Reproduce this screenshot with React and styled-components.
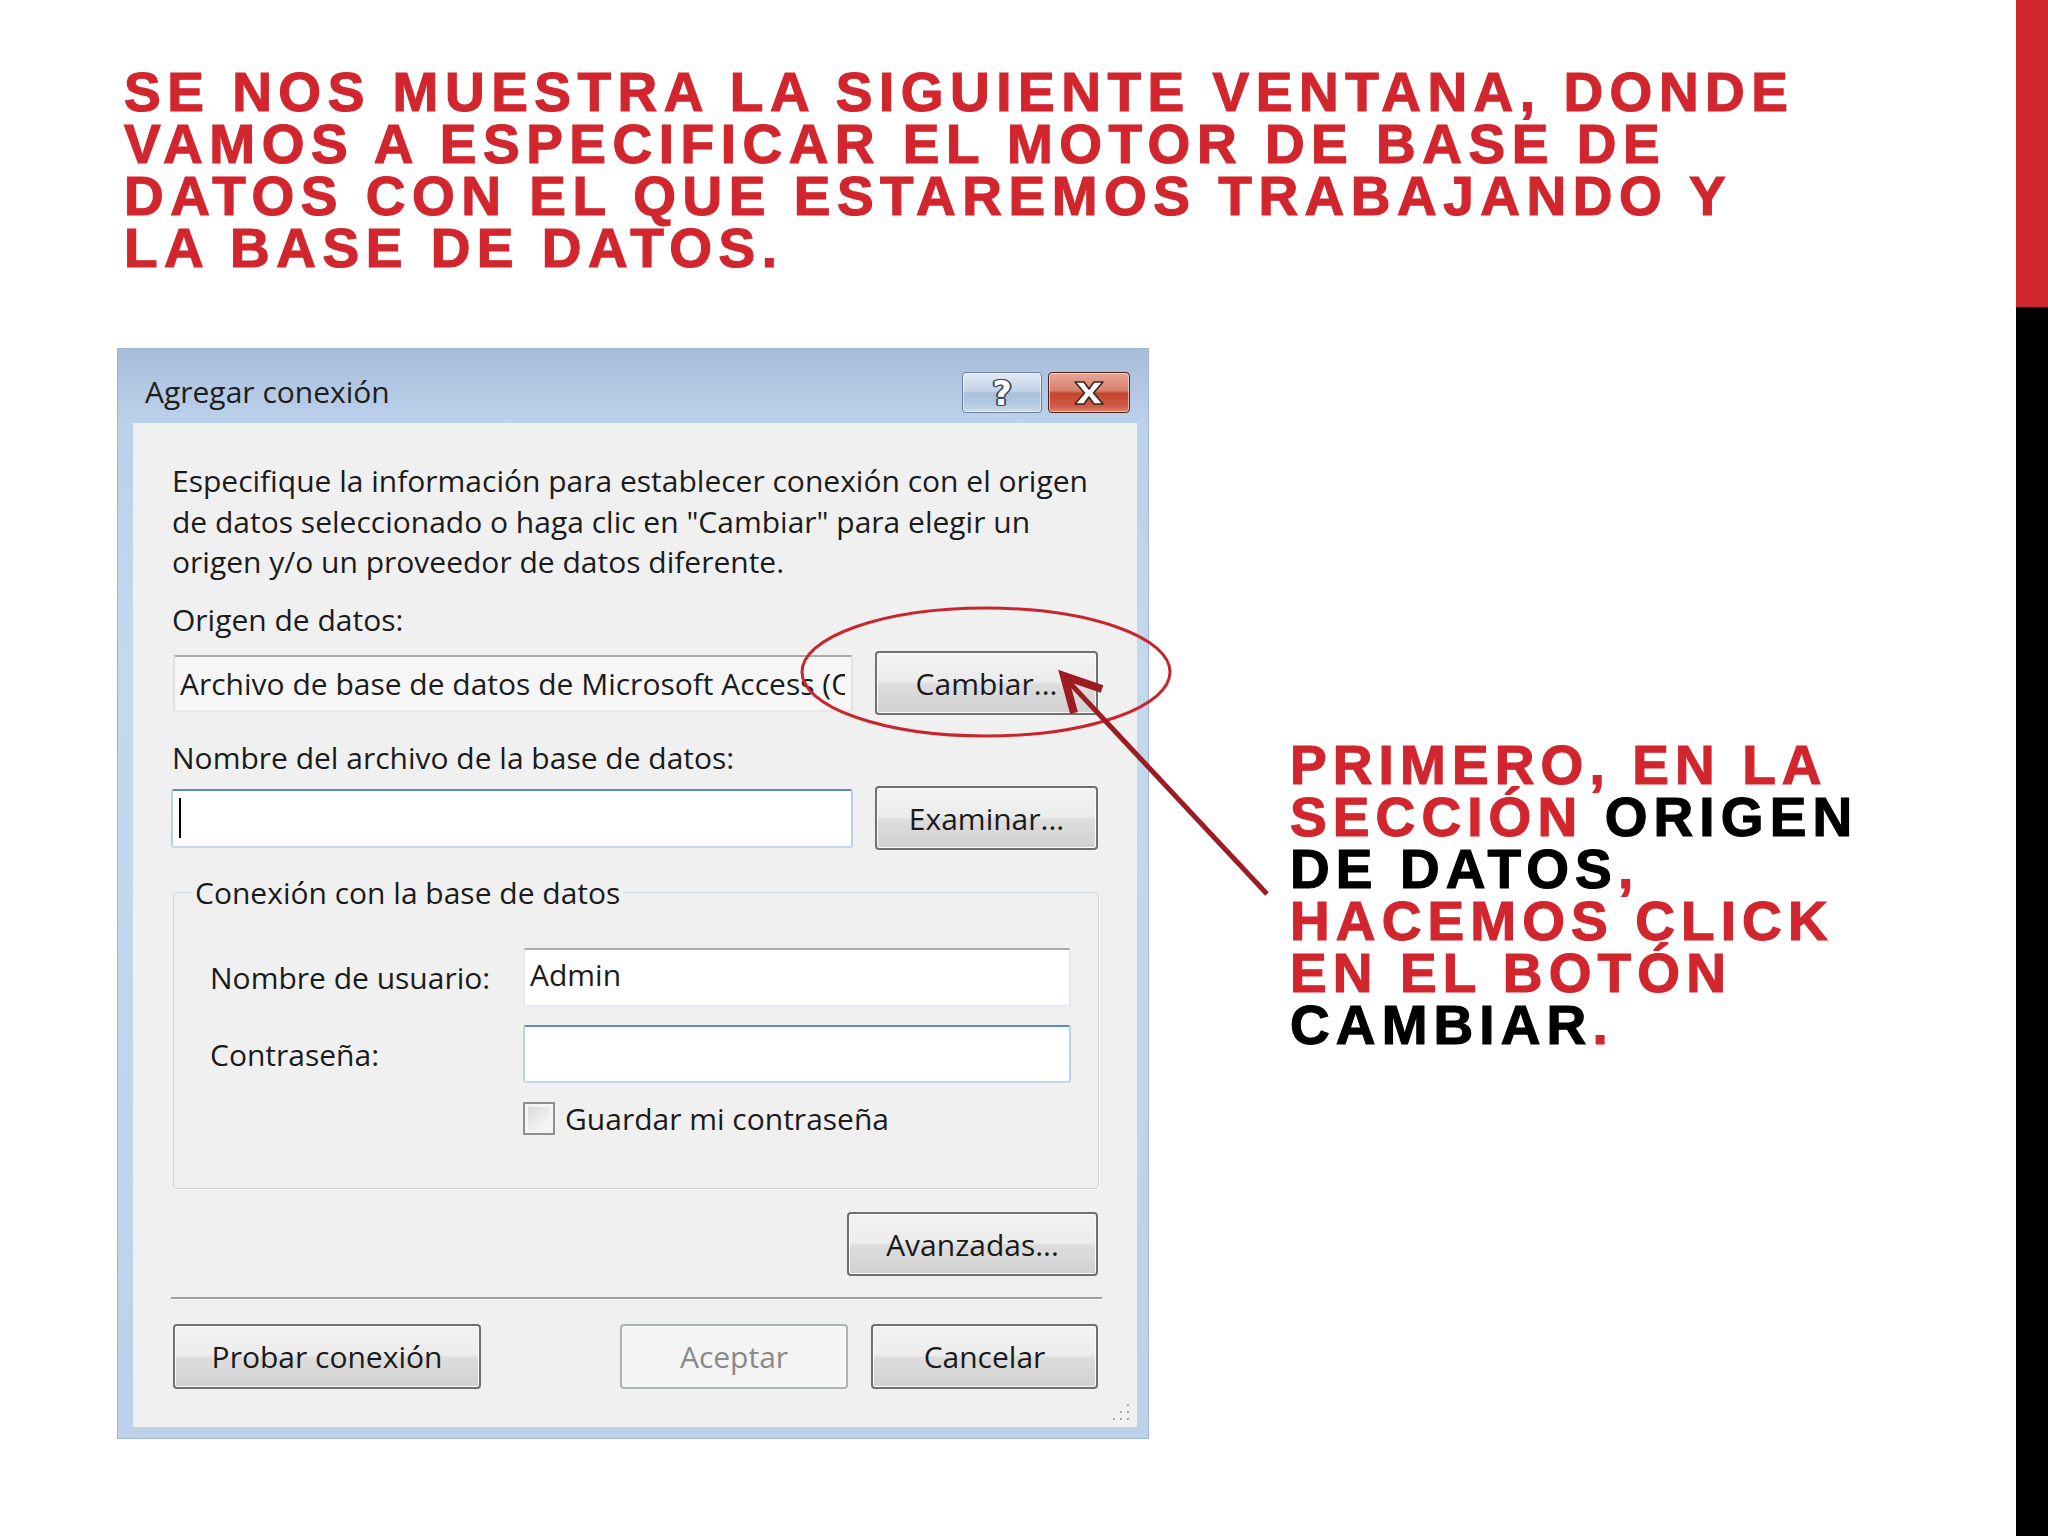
import React from "react";
import styled, { createGlobalStyle } from "styled-components";

const GlobalStyle = createGlobalStyle`
  html, body { margin: 0; padding: 0; background: #ffffff; }
  #root { width: 2048px; height: 1536px; }
  * { box-sizing: border-box; }
`;

const RED = "#d2262e";

const Page = styled.div`
  position: relative;
  display: flex;
  width: 2048px;
  height: 1536px;
  overflow: hidden;
  background: #ffffff;
`;

const Main = styled.div`
  flex: 1;
  padding: 66px 0 0 117px;
`;

const SideBar = styled.div`
  width: 32px;
  display: flex;
  flex-direction: column;
`;

const SideRed = styled.div`
  height: 307px;
  background: ${RED};
`;

const SideBlack = styled.div`
  flex: 1;
  background: #000000;
`;

const Heading = styled.h1`
  margin: 0 0 0 7px;
  font-family: "Liberation Sans", Arial, sans-serif;
  font-weight: 700;
  font-size: 55px;
  line-height: 52px;
  letter-spacing: 6.5px;
  -webkit-text-stroke-width: 1.2px;
  color: ${RED};
  white-space: nowrap;
`;

const ContentRow = styled.div`
  display: flex;
  align-items: flex-start;
  gap: 141px;
  margin-top: 74px;
`;

const Callout = styled.p`
  margin: 391px 0 0 0;
  font-family: "Liberation Sans", Arial, sans-serif;
  font-weight: 700;
  font-size: 55px;
  line-height: 52px;
  letter-spacing: 6.1px;
  -webkit-text-stroke-width: 1.2px;
  color: ${RED};
  white-space: nowrap;
`;

const Dark = styled.span`
  color: #000000;
`;

/* ---------- Windows 7 dialog ---------- */

const Window = styled.div`
  width: 1032px;
  padding: 0 12px 12px 16px;
  background: linear-gradient(180deg, #a6bddb 0px, #bcd1ea 75px, #c4d8ee 320px, #bdd2ea 100%);
  box-shadow: inset 0 0 0 1px #9fb6d3;
  font-family: "Open Sans", "Noto Sans", sans-serif;
  font-size: 30px;
  color: #1b1b1b;
`;

const TitleBar = styled.div`
  height: 75px;
  display: flex;
  align-items: flex-start;
  padding: 23px 7px 0 12px;
`;

const TitleText = styled.div`
  flex: 1;
  line-height: 41px;
  color: #1e1e1e;
`;

const CaptionButtons = styled.div`
  display: flex;
  gap: 6px;
  margin-top: 1px;
`;

const CaptionButton = styled.div`
  width: ${(p) => p.$w}px;
  height: 41px;
  border-radius: 4px;
  display: flex;
  align-items: center;
  justify-content: center;
  border: 1px solid ${(p) => (p.$close ? "#4a2018" : "#6c819d")};
  background: ${(p) =>
    p.$close
      ? "linear-gradient(180deg, #e7a596 0%, #d9806f 45%, #c5442f 52%, #cf5a45 85%, #e08470 100%)"
      : "linear-gradient(180deg, #e1e9f4 0%, #c4d4e8 45%, #a9bfdb 52%, #b7cbe3 85%, #cddcee 100%)"};
  box-shadow: inset 0 0 0 1px rgba(255, 255, 255, 0.55);
`;

const HelpGlyph = styled.span`
  font-family: "DejaVu Sans", sans-serif;
  font-weight: 700;
  font-size: 33px;
  line-height: 1;
  margin-top: 2px;
  color: #ffffff;
  text-shadow: 1px 0 #3d4a5c, -1px 0 #3d4a5c, 0 1px #3d4a5c, 0 -1px #3d4a5c,
    1px 1px #3d4a5c, -1px -1px #3d4a5c, 1px -1px #3d4a5c, -1px 1px #3d4a5c,
    2px 0 #3d4a5c, -2px 0 #3d4a5c;
`;

const Body = styled.div`
  position: relative;
  background: #f0f0f0;
  padding: 38px 39px 38px 39px;
  display: flex;
  flex-direction: column;
`;

const TextBlock = styled.div`
  line-height: ${(p) => p.$lh || 34.5}px;
  white-space: nowrap;
  margin-top: ${(p) => p.$mt || 0}px;
`;

const Row = styled.div`
  display: flex;
  align-items: center;
  gap: 22px;
  margin-top: ${(p) => p.$mt || 0}px;
`;

const TextBox = styled.div`
  flex: ${(p) => (p.$w ? "none" : 1)};
  width: ${(p) => (p.$w ? `${p.$w}px` : "auto")};
  min-width: 0;
  height: ${(p) => p.$h}px;
  margin-left: ${(p) => p.$ml || 0}px;
  display: flex;
  align-items: center;
  padding: 0 ${(p) => p.$pr || 5}px ${(p) => p.$pb || 0}px 5px;
  border: 2px solid;
  border-radius: 3px;
  white-space: nowrap;
  line-height: 41px;
  background: ${(p) => (p.$variant === "readonly" ? "#f6f6f6" : "#ffffff")};
  border-color: ${(p) =>
    p.$variant === "focus"
      ? "#5b8ec2 #b7cfe8 #c3d7ed #b7cfe8"
      : p.$variant === "readonly"
      ? "#a9a9a9 #e2e2e2 #e8e8e8 #e2e2e2"
      : "#a9abb1 #e3e6ec #e6eaf0 #e3e6ec"};
`;

const ClipText = styled.span`
  display: block;
  overflow: hidden;
  flex: 1;
  min-width: 0;
`;

const Caret = styled.span`
  width: 2px;
  height: 40px;
  margin-left: 1px;
  background: #000000;
`;

const Button = styled.div`
  flex: none;
  width: ${(p) => p.$w}px;
  height: ${(p) => p.$h || 64}px;
  align-self: ${(p) => p.$align || "auto"};
  display: flex;
  align-items: center;
  justify-content: center;
  line-height: 41px;
  border-radius: 4px;
  border: 2px solid ${(p) => (p.$disabled ? "#adb2b5" : "#707070")};
  color: ${(p) => (p.$disabled ? "#8a8a8a" : "#1a1a1a")};
  background: ${(p) =>
    p.$disabled
      ? "#f4f4f4"
      : "linear-gradient(180deg, #f3f3f3 0%, #ececec 48%, #dddddd 52%, #d1d1d1 100%)"};
  box-shadow: inset 0 0 0 1px #fbfbfb;
  margin-top: ${(p) => p.$mt || 0}px;
  margin-left: ${(p) => p.$ml || 0}px;
`;

const GroupBox = styled.fieldset`
  margin: 22px 0 0 1px;
  padding: 35px 0 49px 18px;
  width: 926px;
  border: 1px solid #cfd6dc;
  border-radius: 4px;
  box-shadow: 1px 1px 0 #ffffff;
`;

const GroupLegend = styled.legend`
  padding: 0 3px;
  line-height: 41px;
  color: #1b1b1b;
`;

const FieldRow = styled.div`
  display: flex;
  align-items: center;
  margin: ${(p) => p.$mt || 0}px 0 0 18px;
`;

const FieldLabel = styled.div`
  width: 313px;
  line-height: 41px;
  white-space: nowrap;
`;

const CheckBox = styled.div`
  width: 32px;
  height: 33px;
  border: 2px solid #8e8f8f;
  background: linear-gradient(135deg, #d6d6d6 0%, #efefef 60%, #fbfbfb 100%);
  box-shadow: inset 0 0 0 3px #f4f4f4;
`;

const CheckLabel = styled.span`
  margin-left: 10px;
  line-height: 41px;
  white-space: nowrap;
`;

const Separator = styled.div`
  margin: 21px -4px 0 -1px;
  height: 3px;
  border-top: 2px solid #a0a0a0;
  border-bottom: 1px solid #ffffff;
`;

const ButtonBar = styled.div`
  display: flex;
  align-items: center;
  margin-top: 24px;
  padding-left: 1px;
`;

const Spacer = styled.div`
  flex: 1;
`;

const Grip = styled.svg`
  position: absolute;
  right: 6px;
  bottom: 5px;
`;

const Overlay = styled.svg`
  position: absolute;
  left: 0;
  top: 0;
  pointer-events: none;
`;

function CloseGlyph() {
  return (
    <svg width="34" height="24" viewBox="0 0 34 24">
      <path
        d="M3 1 H12 L17 8 L22 1 H31 L21.5 12 L31 23 H22 L17 16 L12 23 H3 L12.5 12 Z"
        fill="#ffffff"
        stroke="#3b2420"
        strokeWidth="1.6"
        strokeLinejoin="round"
      />
    </svg>
  );
}

function ResizeGrip() {
  const dots = [
    [16, 2],
    [9, 9],
    [16, 9],
    [2, 16],
    [9, 16],
    [16, 16],
  ];
  return (
    <Grip width="20" height="20" viewBox="0 0 20 20">
      {dots.map(([x, y], i) => (
        <g key={i}>
          <rect x={x + 1} y={y + 1} width="2" height="2" fill="#ffffff" />
          <rect x={x} y={y} width="2" height="2" fill="#a2a6ab" />
        </g>
      ))}
    </Grip>
  );
}

function Dialog() {
  return (
    <Window>
      <TitleBar>
        <TitleText>Agregar conexión</TitleText>
        <CaptionButtons>
          <CaptionButton $w={80}>
            <HelpGlyph>?</HelpGlyph>
          </CaptionButton>
          <CaptionButton $w={82} $close>
            <CloseGlyph />
          </CaptionButton>
        </CaptionButtons>
      </TitleBar>
      <Body>
        <TextBlock $lh={40.5}>
          Especifique la información para establecer conexión con el origen
          <br />
          de datos seleccionado o haga clic en "Cambiar" para elegir un
          <br />
          origen y/o un proveedor de datos diferente.
        </TextBlock>
        <TextBlock $mt={20.5}>Origen de datos:</TextBlock>
        <Row $mt={13.5}>
          <TextBox $h={57} $ml={1} $pr={6} $variant="readonly">
            <ClipText>Archivo de base de datos de Microsoft Access (OLE DB)</ClipText>
          </TextBox>
          <Button $w={223}>Cambiar...</Button>
        </Row>
        <TextBlock $mt={26}>Nombre del archivo de la base de datos:</TextBlock>
        <Row $mt={10.5}>
          <TextBox $h={59} $ml={-1} $variant="focus">
            <Caret />
          </TextBox>
          <Button $w={223}>Examinar...</Button>
        </Row>
        <GroupBox>
          <GroupLegend>Conexión con la base de datos</GroupLegend>
          <FieldRow>
            <FieldLabel>Nombre de usuario:</FieldLabel>
            <TextBox $w={548} $h={59} $pb={6}>
              Admin
            </TextBox>
          </FieldRow>
          <FieldRow $mt={18}>
            <FieldLabel>Contraseña:</FieldLabel>
            <TextBox $w={548} $h={58} $variant="focus" />
          </FieldRow>
          <FieldRow $mt={15}>
            <FieldLabel />
            <CheckBox />
            <CheckLabel>Guardar mi contraseña</CheckLabel>
          </FieldRow>
        </GroupBox>
        <Button $w={251} $align="flex-end" $mt={23}>
          Avanzadas...
        </Button>
        <Separator />
        <ButtonBar>
          <Button $w={308} $h={65}>
            Probar conexión
          </Button>
          <Spacer />
          <Button $w={228} $h={65} $disabled>
            Aceptar
          </Button>
          <Button $w={227} $h={65} $ml={23}>
            Cancelar
          </Button>
        </ButtonBar>
        <ResizeGrip />
      </Body>
    </Window>
  );
}

export default function App() {
  return (
    <>
      <GlobalStyle />
      <Page>
        <Main>
          <Heading>
            SE NOS MUESTRA LA SIGUIENTE VENTANA, DONDE
            <br />
            VAMOS A ESPECIFICAR EL MOTOR DE BASE DE
            <br />
            DATOS CON EL QUE ESTAREMOS TRABAJANDO Y
            <br />
            LA BASE DE DATOS.
          </Heading>
          <ContentRow>
            <Dialog />
            <Callout>
              PRIMERO, EN LA
              <br />
              SECCIÓN <Dark>ORIGEN</Dark>
              <br />
              <Dark>DE DATOS</Dark>,
              <br />
              HACEMOS CLICK
              <br />
              EN EL BOTÓN
              <br />
              <Dark>CAMBIAR</Dark>.
            </Callout>
          </ContentRow>
        </Main>
        <SideBar>
          <SideRed />
          <SideBlack />
        </SideBar>
        <Overlay width="2048" height="1536" viewBox="0 0 2048 1536">
          <ellipse
            cx="986"
            cy="672"
            rx="184"
            ry="64"
            fill="none"
            stroke="#c8262e"
            strokeWidth="3"
          />
          <line x1="1267" y1="894" x2="1068" y2="681" stroke="#9d1c24" strokeWidth="5" />
          <polyline
            points="1074,713 1064,676 1102,689"
            fill="none"
            stroke="#9d1c24"
            strokeWidth="8"
            strokeLinejoin="miter"
          />
        </Overlay>
      </Page>
    </>
  );
}
